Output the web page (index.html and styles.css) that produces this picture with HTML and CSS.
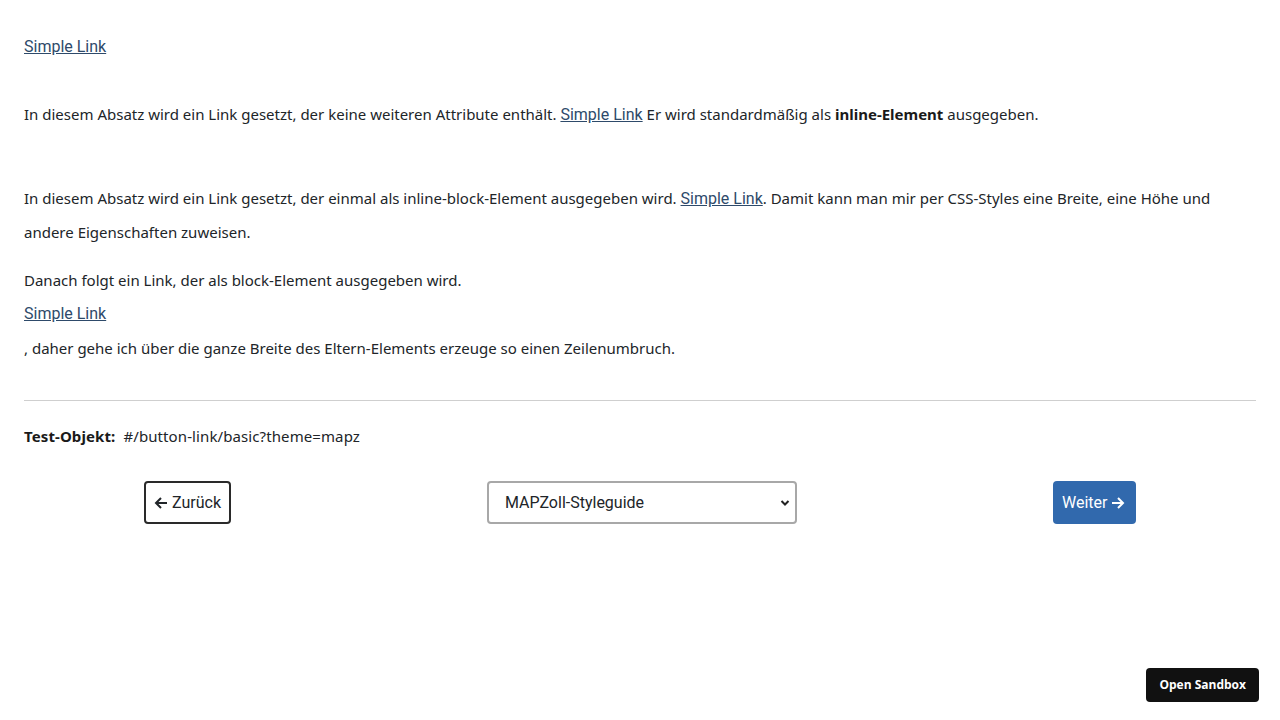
FILE: index.html
```html
<!DOCTYPE html>
<html lang="de">
<head>
<meta charset="utf-8">
<title>Button Link</title>
<link rel="stylesheet" href="styles.css">
</head>
<body>
<main class="page">
  <div class="demo">
    <div class="first"><a class="link" href="#">Simple Link</a></div>
    <p class="p1">In diesem Absatz wird ein Link gesetzt, der keine weiteren Attribute enthält. <a class="link" href="#">Simple Link</a> Er wird standardmäßig als <strong>inline-Element</strong> ausgegeben.</p>
    <p class="p2">In diesem Absatz wird ein Link gesetzt, der einmal als inline-block-Element ausgegeben wird. <a class="link ib" href="#">Simple Link</a>. Damit kann man mir per CSS-Styles eine Breite, eine Höhe und andere Eigenschaften zuweisen.</p>
    <p class="p3">Danach folgt ein Link, der als block-Element ausgegeben wird. <a class="link block" href="#">Simple Link</a>, daher gehe ich über die ganze Breite des Eltern-Elements erzeuge so einen Zeilenumbruch.</p>
  </div>
  <hr class="rule">
  <div class="test"><strong>Test-Objekt:</strong>&nbsp; #/button-link/basic?theme=mapz</div>
  <nav class="pager">
    <button class="btn back" type="button"><svg width="14" height="14" viewBox="0 0 14 14" aria-hidden="true"><path d="M13 7H2M7 2L2 7l5 5" fill="none" stroke="currentColor" stroke-width="2"/></svg>Zurück</button>
    <select class="guide"><option>MAPZoll-Styleguide</option></select>
    <button class="btn next" type="button">Weiter<svg width="14" height="14" viewBox="0 0 14 14" aria-hidden="true"><path d="M1 7h11M7 2l5 5-5 5" fill="none" stroke="currentColor" stroke-width="2"/></svg></button>
  </nav>
</main>
<a class="sandbox" href="#">Open Sandbox</a>
</body>
</html>
```
FILE: styles.css
```css
html, body { margin: 0; padding: 0; background: #fff; }
body {
  font-family: "Noto Sans", "Open Sans", sans-serif;
  font-size: 15px;
  color: #212529;
}
.page { padding: 29px 24px 0; }
.demo { line-height: 34px; }
.first { margin: 0; }
p { margin: 0; }
.p1 { margin-top: 33px; }
.p2 { margin-top: 50px; }
.p3 { margin-top: 14px; }
.link {
  font-family: Roboto, "Liberation Sans", sans-serif;
  font-size: 16px;
  line-height: 18px;
  color: #2e4a6a;
  text-decoration: underline;
}
.first .link { line-height: 34px; }
.ib { display: inline-block; }
.block { display: block; line-height: 34px; }
strong { font-weight: 700; color: #1a1a1a; }
.rule { border: 0; border-top: 1px solid #cfcfcf; margin: 35px 0 0; }
.test { margin-top: 24px; line-height: 22px; letter-spacing: 0.1px; }
.pager {
  display: flex;
  justify-content: space-between;
  align-items: center;
  padding: 0 120px;
  margin-top: 34px;
}
.btn {
  font-family: Roboto, "Liberation Sans", sans-serif;
  font-size: 16px;
  height: 43px;
  padding: 0 8px;
  border-radius: 4px;
  display: inline-flex;
  align-items: center;
  gap: 4px;
  cursor: pointer;
}
.back { background: #fff; color: #212529; border: 2px solid #2a2a2a; width: 87px; }
.next { background: #3169ad; color: #fff; border: 0; width: 83px; padding: 0 9px; }
.guide {
  -webkit-appearance: none;
  appearance: none;
  width: 310px;
  height: 43px;
  border: 2px solid #a8a8a8;
  border-radius: 4px;
  padding: 0 30px 0 16px;
  font-family: Roboto, "Liberation Sans", sans-serif;
  font-size: 16px;
  color: #212529;
  background: #fff url("data:image/svg+xml,%3Csvg xmlns='http://www.w3.org/2000/svg' width='10' height='8' viewBox='0 0 10 8'%3E%3Cpath d='M1.5 2l3.5 3.5L8.5 2' fill='none' stroke='%23222' stroke-width='2'/%3E%3C/svg%3E") no-repeat right 5px center;
}
.sandbox {
  position: fixed;
  right: 21px;
  bottom: 18px;
  background: #111;
  color: #fff;
  font-family: "Open Sans", "Noto Sans", sans-serif;
  font-weight: 700;
  font-size: 12px;
  text-decoration: none;
  height: 34px;
  line-height: 34px;
  padding: 0 13px;
  border-radius: 4px;
}
```
